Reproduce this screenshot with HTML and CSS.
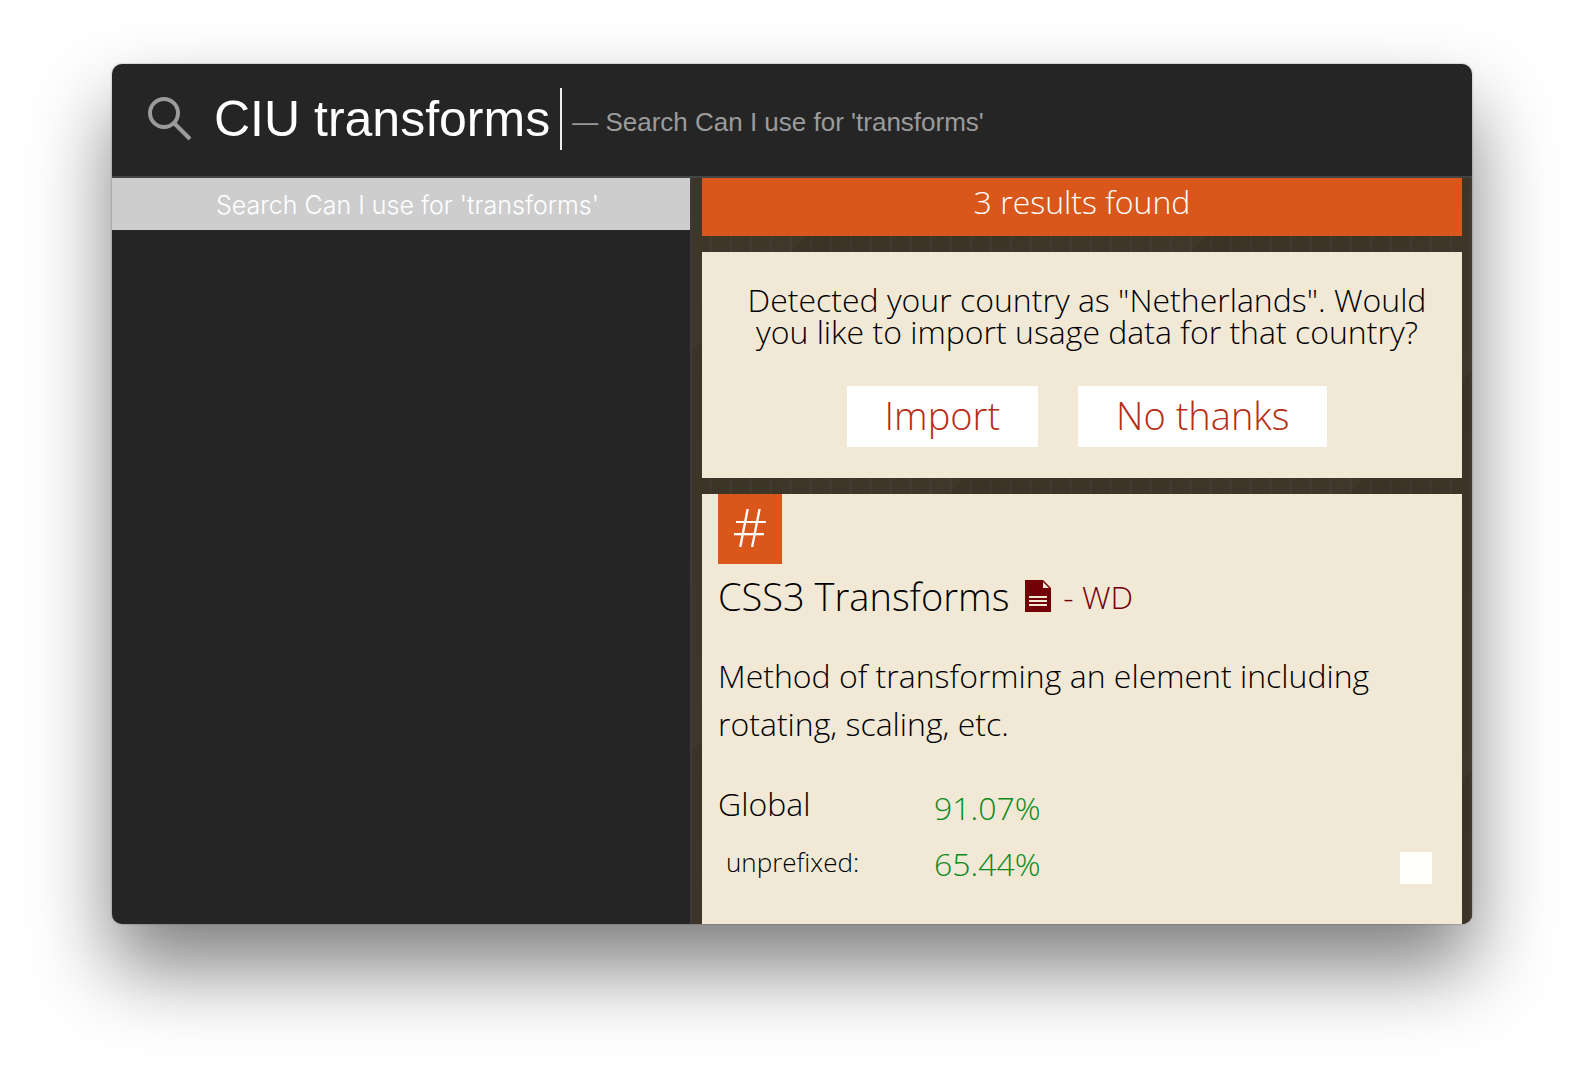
FILE: index.html
```html
<!DOCTYPE html>
<html lang="en">
<head>
  <meta charset="utf-8">
  <meta name="viewport" content="width=device-width, initial-scale=1">
  <title>CIU transforms</title>
  <link rel="stylesheet" href="styles.css">
</head>
<body>
  <main class="window">
    <header class="search">
      <svg class="search-icon" viewBox="0 0 44 44" aria-hidden="true">
        <circle cx="16" cy="16" r="14"/>
        <path d="M26 26 42 42"/>
      </svg>
      <input class="search-input" type="text" value="CIU transforms" aria-label="Search">
      <span class="caret"></span>
      <span class="hint">— Search Can I use for 'transforms'</span>
    </header>
    <div class="panes">
      <nav class="matches">
        <a class="match" href="#results">Search Can I use for 'transforms'</a>
      </nav>
      <section class="results" id="results">
        <h2 class="banner">3 results found</h2>
        <div class="card prompt">
          <p class="prompt-text">Detected your country as "Netherlands". Would you like to import usage data for that country?</p>
          <div class="prompt-actions">
            <button class="button" type="button">Import</button>
            <button class="button" type="button">No thanks</button>
          </div>
        </div>
        <article class="card feature">
          <a class="anchor" href="#feature">#</a>
          <div class="feature-head" id="feature">
            <h3 class="feature-title">CSS3 Transforms</h3>
            <a class="spec" href="#spec">
              <svg class="spec-icon" viewBox="0 0 26 32" aria-hidden="true">
                <path class="sheet" d="M0 0H18L26 8V32H0Z"/>
                <path class="fold" d="M18 2V8H24Z"/>
                <path class="lines" d="M4 17H22M4 21H22M4 25H22"/>
              </svg>
              <span>- WD</span>
            </a>
          </div>
          <p class="description">Method of transforming an element including rotating, scaling, etc.</p>
          <div class="usage">
            <dl class="stats">
              <dt>Global</dt>
              <dd>91.07%</dd>
              <dt class="sub">unprefixed:</dt>
              <dd>65.44%</dd>
            </dl>
            <span class="swatch"></span>
          </div>
        </article>
      </section>
    </div>
  </main>
</body>
</html>
```
FILE: styles.css
```css
* {
  box-sizing: border-box;
}

body {
  margin: 0;
  min-height: 100vh;
  padding: 64px 112px 160px;
  display: flex;
  background: #fff;
  font-family: "Open Sans", "Noto Sans", sans-serif;
  font-size: 32px;
  font-weight: 300;
  color: #000;
}

h2, h3, p, dl, dd {
  margin: 0;
  font-weight: 300;
}

a {
  text-decoration: none;
}

.window {
  flex: 1;
  min-width: 0;
  display: flex;
  flex-direction: column;
  border-radius: 10px;
  overflow: hidden;
  background: #252525;
  box-shadow: 0 0 2px rgba(0, 0, 0, .4), 0 44px 80px rgba(0, 0, 0, .5);
}

.search {
  display: flex;
  align-items: center;
  height: 114px;
  padding: 0 36px 2px;
  border-bottom: 2px solid #444;
  font-family: "Liberation Sans", Arial, sans-serif;
}

.search-icon {
  flex: none;
  width: 44px;
  height: 44px;
  margin-right: 22px;
  fill: none;
  stroke: #9b9b9b;
  stroke-width: 4;
}

.search-input {
  field-sizing: content;
  padding: 0;
  border: 0;
  outline: 0;
  background: none;
  color: #fff;
  font: 50px/62px "Liberation Sans", Arial, sans-serif;
}

.caret {
  width: 2px;
  height: 62px;
  margin: 0 10px;
  background: #eee;
}

.hint {
  padding-top: 6px;
  font-size: 26px;
  font-weight: 400;
  white-space: nowrap;
  color: #9b9b9b;
}

.panes {
  flex: 1;
  display: grid;
  grid-template-columns: 580fr 780fr;
}

.matches {
  border-right: 2px solid #3c3a38;
}

.match {
  display: block;
  height: 52px;
  padding-left: 104px;
  background: #cdcdcd;
  color: #fff;
  font: 300 25px/54px Inter, "Liberation Sans", sans-serif;
  white-space: nowrap;
}

.results {
  display: flex;
  flex-direction: column;
  gap: 16px;
  padding: 0 10px;
  background-color: #3e3529;
  background-image:
    repeating-linear-gradient(90deg, transparent 0 18px, rgba(255, 255, 255, .03) 18px 20px),
    linear-gradient(135deg, #3c3327, #40372b 50%, #3c3327 50%, #40372b);
  background-size: auto, 400px 400px;
  background-position: 0 0, 173px 0;
}

.banner {
  padding-bottom: 10px;
  background: #d9571a;
  color: #fff;
  font-size: 32px;
  line-height: 48px;
  text-align: center;
}

.card {
  background: #f1e8d6;
}

.prompt {
  padding: 32px 22px 31px 32px;
  text-align: center;
}

.prompt-text {
  line-height: 32px;
}

.prompt-actions {
  display: flex;
  justify-content: center;
  gap: 40px;
  margin-top: 38px;
}

.button {
  padding: 0 38px 2px;
  border: 0;
  background: #fff;
  color: #b62d14;
  font: 300 38px/59px "Open Sans", "Noto Sans", sans-serif;
}

.feature {
  flex: 1;
  padding: 0 16px;
}

.anchor {
  display: block;
  width: 64px;
  height: 70px;
  background: #d9571a;
  color: #fff;
  font-size: 54px;
  line-height: 64px;
  text-align: center;
}

.feature-head {
  display: flex;
  align-items: center;
  gap: 16px;
  height: 64px;
}

.feature-title {
  font-size: 38px;
  line-height: 64px;
}

.spec {
  display: flex;
  align-items: center;
  gap: 12px;
  color: #740007;
}

.spec-icon {
  width: 26px;
  height: 32px;
}

.sheet {
  fill: #740007;
}

.fold {
  fill: #f1e8d6;
}

.lines {
  fill: none;
  stroke: #f1e8d6;
  stroke-width: 2;
}

.description {
  margin-top: 24px;
  line-height: 48px;
}

.usage {
  display: flex;
  align-items: flex-end;
  justify-content: space-between;
  margin-top: 32px;
  padding-right: 14px;
}

.stats {
  display: grid;
  grid-template-columns: 216px auto;
  line-height: 56px;
}

.stats dt {
  line-height: 48px;
}

.stats .sub {
  padding-left: 8px;
  font-size: 26px;
  line-height: 52px;
}

.stats dd {
  color: #0c8a1c;
}

.swatch {
  width: 32px;
  height: 32px;
  margin-bottom: 8px;
  background: #fffffb;
}
```
